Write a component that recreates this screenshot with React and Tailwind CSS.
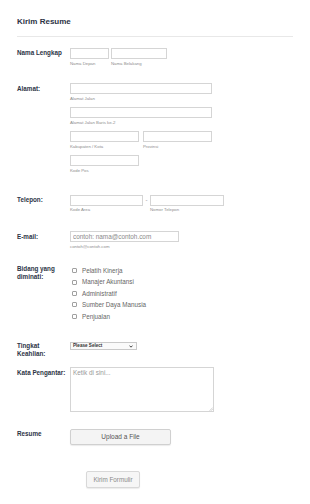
const areas = ['Pelatih Kinerja', 'Manajer Akuntansi', 'Administratif', 'Sumber Daya Manusia', 'Penjualan']

function Label({ children, pt = 'pt-[1px]' }) {
  return (
    <div className={`w-[50px] shrink-0 text-[6.3px] leading-[8px] font-bold text-[#2c3345] ${pt}`}>
      {children}
    </div>
  )
}

function Sub({ children }) {
  return <div className="mt-[1.5px] text-[4.3px] leading-[5px] text-[#8d8d8d]">{children}</div>
}

function Box({ w }) {
  return <div className={`h-[11px] border border-[#d5d5d5] bg-white ${w}`} />
}

export default function App() {
  return (
    <div className="min-h-screen bg-white px-[17px]" style={{ fontFamily: '"Liberation Sans", Arial, sans-serif' }}>
      <div className="pt-[17px] h-[27px] text-[8px] leading-[10px] font-bold text-[#2c3345]">Kirim Resume</div>
      <div className="mt-[9px] border-t border-[#e8e8e8]" />

      <div className="mt-[11px] flex flex-col">
        {/* Nama */}
        <div className="h-[35px] flex gap-[3px]">
          <Label>Nama Lengkap</Label>
          <div className="flex gap-[2px]">
            <div>
              <Box w="w-[39px]" />
              <Sub>Nama Depan</Sub>
            </div>
            <div>
              <Box w="w-[56px]" />
              <Sub>Nama Belakang</Sub>
            </div>
          </div>
        </div>

        {/* Alamat */}
        <div className="h-[112px] flex gap-[3px]">
          <Label pt="pt-[2px]">Alamat:</Label>
          <div>
            <div className="h-[24px]">
              <Box w="w-[142px]" />
              <Sub>Alamat Jalan</Sub>
            </div>
            <div className="h-[24px]">
              <Box w="w-[142px]" />
              <Sub>Alamat Jalan Baris ke-2</Sub>
            </div>
            <div className="h-[24px] flex gap-[4px]">
              <div>
                <Box w="w-[69px]" />
                <Sub>Kabupaten / Kota</Sub>
              </div>
              <div>
                <Box w="w-[69px]" />
                <Sub>Provinsi</Sub>
              </div>
            </div>
            <div className="h-[24px]">
              <Box w="w-[69px]" />
              <Sub>Kode Pos</Sub>
            </div>
          </div>
        </div>

        {/* Telepon */}
        <div className="h-[36px] flex gap-[3px]">
          <Label pt="pt-[1px]">Telepon:</Label>
          <div className="flex">
            <div>
              <div className="h-[10.5px] w-[73px] border border-[#d5d5d5]" />
              <Sub>Kode Area</Sub>
            </div>
            <div className="w-[7px] text-center text-[6px] leading-[10px] text-[#888]">-</div>
            <div>
              <div className="h-[10.5px] w-[74px] border border-[#d5d5d5]" />
              <Sub>Nomor Telepon</Sub>
            </div>
          </div>
        </div>

        {/* Email */}
        <div className="h-[34px] flex gap-[3px]">
          <Label pt="pt-[2px]">E-mail:</Label>
          <div>
            <input
              className="block h-[11px] w-[109px] border border-[#d5d5d5] px-[2px] text-[6.4px] leading-[9px] outline-none placeholder:text-[#8a8a8a]"
              placeholder="contoh: nama@contoh.com"
            />
            <Sub>contoh@contoh.com</Sub>
          </div>
        </div>

        {/* Bidang */}
        <div className="h-[77px] flex gap-[3px]">
          <Label pt="pt-0">Bidang yang diminati:</Label>
          <div className="flex flex-col">
            {areas.map((a) => (
              <div key={a} className="h-[11.4px] flex items-center gap-[5px] pl-[2px]">
                <span className="w-[5px] h-[5px] rounded-[1px] border border-[#a0a0a0] bg-white" />
                <span className="text-[6.3px] text-[#666]">{a}</span>
              </div>
            ))}
          </div>
        </div>

        {/* Tingkat */}
        <div className="h-[25px] flex gap-[3px]">
          <Label pt="pt-0">Tingkat Keahlian:</Label>
          <div className="h-[8px] w-[67px] border border-[#c9c9c9] bg-[#fafafa] flex items-center justify-between pl-[2px] pr-[3px]">
            <span className="text-[4.6px] font-bold text-[#333]">Please Select</span>
            <svg width="4" height="3" viewBox="0 0 4 3">
              <path d="M0.5 0.6 L2 2.2 L3.5 0.6" fill="none" stroke="#333" strokeWidth="0.9" />
            </svg>
          </div>
        </div>

        {/* Kata Pengantar */}
        <div className="h-[62px] flex items-start gap-[3px]">
          <Label pt="pt-[2px]">Kata Pengantar:</Label>
          <div className="relative">
            <textarea
              className="block h-[45px] w-[144px] resize-none border border-[#d5d5d5] px-[2px] py-[1px] text-[6.4px] leading-[8px] outline-none placeholder:text-[#999]"
              placeholder="Ketik di sini..."
            />
            <svg className="absolute right-[1px] bottom-[1px]" width="4" height="4" viewBox="0 0 4 4">
              <path d="M0.5 3.8 L3.8 0.5 M2 3.8 L3.8 2" stroke="#aaa" strokeWidth="0.5" />
            </svg>
          </div>
        </div>

        {/* Resume */}
        <div className="h-[42px] flex gap-[3px]">
          <Label pt="pt-[1px]">Resume</Label>
          <button className="h-[16px] w-[101px] rounded-[2px] border border-[#d0d0d0] bg-[#f4f4f4] shadow-[0_1px_1px_rgba(0,0,0,0.08)] text-[6.5px] text-[#555]">
            Upload a File
          </button>
        </div>

        {/* Submit */}
        <div className="flex gap-[3px]">
          <div className="w-[50px] shrink-0" />
          <button className="ml-[16px] h-[17px] w-[54px] rounded-[2px] border border-[#d8d8d8] bg-[#f6f6f6] shadow-[0_1px_1px_rgba(0,0,0,0.08)] text-[6.3px] text-[#8a8a8a]">
            Kirim Formulir
          </button>
        </div>
      </div>
    </div>
  )
}
